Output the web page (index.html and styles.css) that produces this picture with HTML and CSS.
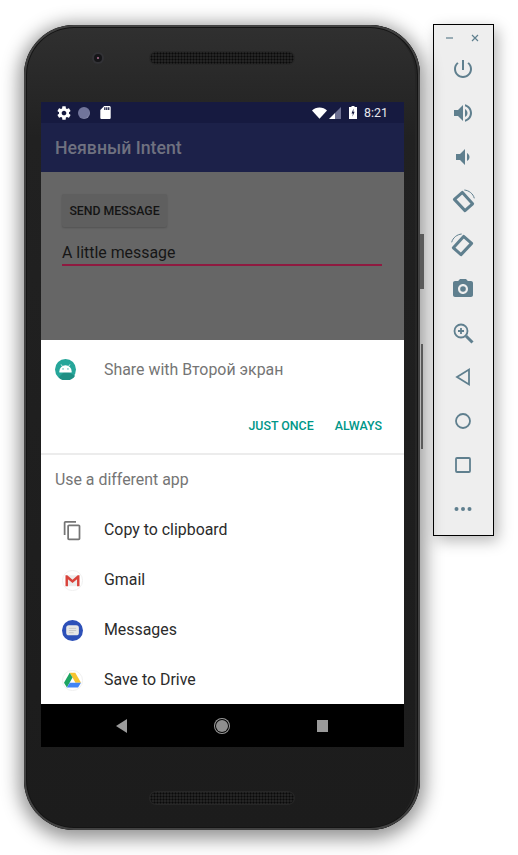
FILE: index.html
```html
<!DOCTYPE html>
<html lang="ru">
<head>
    <meta charset="UTF-8">
    <title>Неявный Intent</title>
    <link rel="stylesheet" href="styles.css">
</head>
<body>
    <div class="phone">
        <div class="side-key side-key-top"></div>
        <div class="side-key side-key-bottom"></div>

        <div class="phone-top">
            <div class="lens"></div>
            <div class="speaker"></div>
        </div>

        <div class="screen">
            <div class="status-bar">
                <div class="status-left">
                    <svg class="status-gear" viewBox="0 0 24 24"><path d="M19.43 12.98c.04-.32.07-.64.07-.98s-.03-.66-.07-.98l2.11-1.65c.19-.15.24-.42.12-.64l-2-3.46c-.12-.22-.39-.3-.61-.22l-2.49 1c-.52-.4-1.08-.73-1.69-.98l-.38-2.65C14.46 2.18 14.25 2 14 2h-4c-.25 0-.46.18-.49.42l-.38 2.65c-.61.25-1.17.59-1.69.98l-2.49-1c-.23-.09-.49 0-.61.22l-2 3.46c-.13.22-.07.49.12.64l2.11 1.65c-.04.32-.07.65-.07.98s.03.66.07.98l-2.11 1.65c-.19.15-.24.42-.12.64l2 3.46c.12.22.39.3.61.22l2.49-1c.52.4 1.08.73 1.69.98l.38 2.65c.03.24.24.42.49.42h4c.25 0 .46-.18.49-.42l.38-2.65c.61-.25 1.17-.59 1.69-.98l2.49 1c.23.09.49 0 .61-.22l2-3.46c.12-.22.07-.49-.12-.64l-2.11-1.65zM12 15.5c-1.93 0-3.5-1.57-3.5-3.5s1.57-3.5 3.5-3.5 3.5 1.57 3.5 3.5-1.57 3.5-3.5 3.5z"/></svg>
                    <div class="status-dot"></div>
                    <svg class="status-sd" viewBox="4 2 16 20"><path d="M18 2h-8L4.02 8 4 20c0 1.1.9 2 2 2h12c1.1 0 2-.9 2-2V4c0-1.1-.9-2-2-2zm-6 6h-2V4h2v4zm3 0h-2V4h2v4zm3 0h-2V4h2v4z"/></svg>
                </div>
                <div class="status-right">
                    <svg class="status-wifi" viewBox="0 0 16 12"><path d="M0 3.200C2 1.200 5 0 8 0s6 1.200 8 3.200L8 12z"/></svg>
                    <svg class="status-signal" viewBox="0 0 12 12"><path class="signal-off" d="M12 0v12H6V6z"/><path d="M6 6v6H0z"/></svg>
                    <svg class="status-battery" viewBox="0 0 8 13"><path d="M2.500 0h3v1H8v12H0V1h2.500z"/><path class="bolt" d="M4.600 2.500L2.500 7.400h1.400l-.5 3.400 2.200-5H4.300z"/></svg>
                    <span class="status-time">8:21</span>
                </div>
            </div>

            <div class="app-bar">Неявный Intent</div>

            <div class="app-content">
                <div class="send-button">SEND MESSAGE</div>
                <div class="message-input">A little message</div>
            </div>

            <div class="sheet">
                <div class="sheet-head">
                    <svg class="app-icon" viewBox="0 0 24 24">
                        <circle cx="12" cy="12" r="12" fill="#26a69a"/>
                        <path d="M12 13l11 6a12 12 0 0 1-19 2z" fill="#1f8f84"/>
                        <path d="M5 14a7 7 0 0 1 14 0v1.500H5z" fill="#fff"/>
                        <path d="M8.500 8.500L7 6.200M15.500 8.500l1.500-2.300" stroke="#fff" stroke-width=".9"/>
                        <circle cx="9.200" cy="11.300" r=".8" fill="#26a69a"/>
                        <circle cx="14.800" cy="11.300" r=".8" fill="#26a69a"/>
                    </svg>
                    <span class="sheet-title">Share with Второй экран</span>
                </div>
                <div class="sheet-actions">
                    <span>JUST ONCE</span>
                    <span>ALWAYS</span>
                </div>
                <div class="sheet-label">Use a different app</div>

                <div class="share-row">
                    <svg class="copy-icon" viewBox="0 0 24 24"><path d="M16 1H4c-1.100 0-2 .9-2 2v14h2V3h12V1zm3 4H8c-1.100 0-2 .9-2 2v14c0 1.100.9 2 2 2h11c1.100 0 2-.9 2-2V7c0-1.100-.9-2-2-2zm0 16H8V7h11v14z"/></svg>
                    <span>Copy to clipboard</span>
                </div>
                <div class="share-row">
                    <svg class="app-icon" viewBox="0 0 24 24">
                        <circle cx="12" cy="12" r="11.500" fill="#fff" stroke="#eee"/>
                        <path d="M4.500 6h15v12.500h-15z" fill="#ececec"/>
                        <path d="M4 18.500V6h2l6 5 6-5h2v12.500h-2.800v-8L12 14.800 6.800 10.500v8z" fill="#d9433b"/>
                    </svg>
                    <span>Gmail</span>
                </div>
                <div class="share-row">
                    <svg class="app-icon" viewBox="0 0 24 24">
                        <circle cx="12" cy="12" r="12" fill="#2d50b8"/>
                        <rect x="4.800" y="6" width="14.500" height="11.500" rx="3" fill="#e6e6e6"/>
                        <path d="M7.800 9.500h8.400M7.800 12h8.400M7.800 14.500h5.500" stroke="#c4c4c4"/>
                    </svg>
                    <span>Messages</span>
                </div>
                <div class="share-row">
                    <svg class="app-icon" viewBox="0 0 24 24">
                        <circle cx="12" cy="12" r="11.500" fill="#fff" stroke="#eee"/>
                        <path d="M8.800 3h6.400l6.500 11.500h-6.300z" fill="#f7c32e"/>
                        <path d="M8.800 3l3.200 5.500-6.400 11.500-3.300-5.500z" fill="#1da462"/>
                        <path d="M8.800 14.500h12.900L18.400 20H5.600z" fill="#4285f4"/>
                    </svg>
                    <span>Save to Drive</span>
                </div>
            </div>

            <div class="nav-bar">
                <svg class="nav-back" viewBox="0 0 11 14"><path d="M11 0v14L0 7z"/></svg>
                <div class="nav-home"></div>
                <div class="nav-recent"></div>
            </div>
        </div>

        <div class="phone-bottom">
            <div class="speaker"></div>
        </div>
    </div>

    <div class="tool-panel">
        <div class="tool-window">
            <svg viewBox="0 0 10 10"><path d="M1 5h7"/></svg>
            <svg viewBox="0 0 10 10"><path d="M2 2l6 6M8 2L2 8"/></svg>
        </div>
        <div class="tool-icon">
            <svg viewBox="0 0 24 24"><path d="M13 3h-2v10h2V3zm4.830 2.170l-1.420 1.420C17.990 7.860 19 9.810 19 12c0 3.870-3.130 7-7 7s-7-3.130-7-7c0-2.190 1.010-4.140 2.580-5.420L6.170 5.170C4.230 6.820 3 9.260 3 12c0 4.970 4.030 9 9 9s9-4.030 9-9c0-2.740-1.230-5.180-3.170-6.830z"/></svg>
        </div>
        <div class="tool-icon">
            <svg viewBox="0 0 24 24"><path d="M3 9v6h4l5 5V4L7 9H3zm13.500 3c0-1.770-1.020-3.290-2.500-4.030v8.050c1.480-.73 2.500-2.250 2.500-4.020zM14 3.230v2.060c2.890.86 5 3.540 5 6.710s-2.110 5.850-5 6.710v2.060c4.010-.91 7-4.490 7-8.770s-2.990-7.860-7-8.770z"/></svg>
        </div>
        <div class="tool-icon">
            <svg viewBox="0 0 24 24"><path d="M18.500 12c0-1.770-1.020-3.290-2.500-4.030v8.050c1.480-.73 2.500-2.250 2.500-4.020zM5 9v6h4l5 5V4L9 9H5z"/></svg>
        </div>
        <div class="tool-icon">
            <svg viewBox="0 0 24 24"><path class="line" d="M11.400 3.400L3.400 10.400 14 21.600l7.600-6.800z"/><path class="arc" d="M13.300 1c4.600.4 8.900 3.700 10 8.300"/></svg>
        </div>
        <div class="tool-icon">
            <svg viewBox="0 0 24 24"><path class="line" d="M12.600 3.400l8 7L10 21.600l-7.600-6.800z"/><path class="arc" d="M10.700 1C6.100 1.400 1.800 4.700.7 9.300"/></svg>
        </div>
        <div class="tool-icon">
            <svg viewBox="0 0 24 24"><path d="M9 2L7.170 4H4c-1.100 0-2 .9-2 2v12c0 1.100.9 2 2 2h16c1.100 0 2-.9 2-2V6c0-1.100-.9-2-2-2h-3.170L15 2H9zm3 15c-2.760 0-5-2.240-5-5s2.240-5 5-5 5 2.240 5 5-2.240 5-5 5z"/><circle cx="12" cy="12" r="2.800"/></svg>
        </div>
        <div class="tool-icon">
            <svg viewBox="0 0 24 24"><circle class="thin" cx="10" cy="10" r="6.500"/><path class="thin" d="M10 7v6M7 10h6"/><path class="line" d="M15 15l6.500 6.500"/></svg>
        </div>
        <div class="tool-icon">
            <svg viewBox="0 0 24 24"><path class="thin" d="M18 4.500v15L6 12z"/></svg>
        </div>
        <div class="tool-icon">
            <svg viewBox="0 0 24 24"><circle class="thin" cx="12" cy="12" r="7"/></svg>
        </div>
        <div class="tool-icon">
            <svg viewBox="0 0 24 24"><rect class="thin" x="5" y="5" width="14" height="14" rx="1"/></svg>
        </div>
        <div class="tool-icon">
            <svg viewBox="0 0 24 24"><circle cx="5.500" cy="12" r="2"/><circle cx="12" cy="12" r="2"/><circle cx="18.500" cy="12" r="2"/></svg>
        </div>
    </div>
</body>
</html>
```

FILE: styles.css
```css
html, body {
    margin: 0;
    padding: 0;
}

body {
    width: 518px;
    height: 855px;
    overflow: hidden;
    background: #fff;
    font-family: Roboto, "Noto Sans", sans-serif;
    display: flex;
    align-items: flex-start;
}

/* phone */

.phone {
    position: relative;
    box-sizing: border-box;
    width: 396px;
    height: 805px;
    margin: 25px 0 0 24px;
    padding: 0 16px 0 17px;
    border-radius: 50px;
    background: linear-gradient(#303030, #212121 14%, #1c1c1c);
    box-shadow: inset 0 0 0 2px #424242, inset 0 0 0 3px #141414, inset -5px 0 0 #252525, 0 4px 18px 5px rgba(0, 0, 0, 0.42);
}

.side-key {
    position: absolute;
    background: #5a5a5a;
}

.side-key-top {
    top: 209px;
    right: -4px;
    width: 4px;
    height: 55px;
}

.side-key-bottom {
    top: 319px;
    right: -3px;
    width: 2px;
    height: 105px;
}

.phone-top {
    position: relative;
    height: 77px;
    display: flex;
    justify-content: center;
    padding: 27px 1px 0 0;
    box-sizing: border-box;
}

.phone-bottom {
    display: flex;
    justify-content: center;
    padding: 45px 1px 0 0;
}

.speaker {
    width: 144px;
    height: 12px;
    border-radius: 6px;
    box-shadow: 0 0 0 1px #272727;
    background: radial-gradient(circle, #0a0a0a 0.8px, #242424 1.2px) 0 0 / 3px 3px;
}

.lens {
    position: absolute;
    left: 53px;
    top: 29px;
    width: 8px;
    height: 8px;
    border-radius: 50%;
    background: radial-gradient(circle, #8a5a74 0.8px, #151518 1.6px);
    box-shadow: 0 0 0 2px #323236;
}

.screen {
    width: 363px;
    height: 645px;
    display: flex;
    flex-direction: column;
    overflow: hidden;
}

/* status bar */

.status-bar {
    height: 21px;
    flex: none;
    background: #161a40;
    display: flex;
    justify-content: space-between;
    align-items: center;
    padding: 0 16px;
    box-sizing: border-box;
}

.status-left,
.status-right {
    display: flex;
    align-items: center;
}

.status-bar svg {
    fill: #fff;
    display: block;
}

.status-gear {
    width: 16px;
    height: 16px;
    margin-left: -1px;
}

.status-dot {
    width: 12px;
    height: 12px;
    margin-left: 6px;
    border-radius: 50%;
    background: radial-gradient(circle at 40% 40%, #71759b 60%, #b4b6c8);
}

.status-sd {
    width: 11px;
    height: 13px;
    margin-left: 10px;
}

.status-wifi {
    width: 15px;
    height: 12px;
}

.status-signal {
    width: 12px;
    height: 12px;
    margin-left: 2px;
}

.status-bar .signal-off {
    fill: #6c6f91;
}

.status-battery {
    width: 8px;
    height: 13px;
    margin-left: 8px;
}

.status-bar .bolt {
    fill: #161a40;
}

.status-time {
    margin-left: 7px;
    font-size: 12.400px;
    color: #e6e7ec;
}

/* app behind the sheet */

.app-bar {
    height: 49px;
    flex: none;
    background: #1c2149;
    color: #6f7180;
    font-size: 17.700px;
    font-weight: 500;
    line-height: 51px;
    padding-left: 14px;
}

.app-content {
    height: 168px;
    flex: none;
    box-sizing: border-box;
    background: #666;
    padding: 22px 22px 0 21px;
}

.send-button {
    width: 105px;
    height: 33px;
    background: #5f5f5f;
    border-radius: 2px;
    box-shadow: 0 1px 2px rgba(0, 0, 0, 0.2);
    color: #141414;
    font-size: 12.300px;
    line-height: 34px;
    text-align: center;
    font-weight: 500;
}

.message-input {
    margin-top: 14px;
    height: 23px;
    border-bottom: 2px solid #8f1a40;
    color: #161616;
    font-size: 15.900px;
    line-height: 23px;
}

/* share sheet */

.sheet {
    height: 364px;
    flex: none;
    background: #fff;
    overflow: hidden;
    font-size: 15.900px;
    color: #2b2b2b;
}

.sheet-head {
    height: 58px;
    display: flex;
    align-items: center;
    padding-left: 14px;
}

.sheet-title {
    margin-left: 28px;
    color: #757575;
}

.app-icon {
    width: 21px;
    height: 21px;
    flex: none;
}

.sheet-actions {
    height: 57px;
    box-sizing: border-box;
    display: flex;
    justify-content: flex-end;
    align-items: center;
    gap: 21px;
    padding-right: 22px;
    border-bottom: 2px solid #ececec;
    color: #009688;
    font-size: 12.400px;
    font-weight: 500;
}

.sheet-label {
    height: 50px;
    line-height: 50px;
    padding-left: 14px;
    color: #757575;
}

.share-row {
    height: 50px;
    display: flex;
    align-items: center;
    padding-left: 21px;
}

.share-row span {
    margin: 0 0 2px 21px;
}

.copy-icon {
    width: 21px;
    height: 21px;
    flex: none;
    fill: #757575;
}

/* nav bar */

.nav-bar {
    height: 43px;
    flex: none;
    background: #000;
    display: flex;
    align-items: center;
    padding-left: 75px;
}

.nav-back {
    width: 11px;
    height: 14px;
    fill: #9a9a9a;
}

.nav-home {
    width: 12px;
    height: 12px;
    margin-left: 89px;
    border-radius: 50%;
    background: #8f8f8f;
    box-shadow: 0 0 0 1px #000, 0 0 0 2px #9a9a9a;
}

.nav-recent {
    width: 11px;
    height: 12px;
    margin-left: 89px;
    background: #9a9a9a;
}

/* emulator tool panel */

.tool-panel {
    box-sizing: border-box;
    width: 61px;
    height: 512px;
    margin: 24px 0 0 13px;
    padding: 6px 2px 0 0;
    background: #eee;
    border: 1px solid #000;
    box-shadow: 4px 5px 14px rgba(0, 0, 0, 0.28);
    display: flex;
    flex-direction: column;
    align-items: center;
}

.tool-window {
    height: 15px;
    margin-bottom: 1px;
    display: flex;
    gap: 15px;
}

.tool-window svg {
    width: 10px;
    height: 10px;
    margin-top: 2px;
    fill: none;
    stroke: #5f7f8e;
    stroke-width: 1.200px;
}

.tool-icon {
    height: 44px;
    width: 100%;
    flex: none;
    display: flex;
    justify-content: center;
    align-items: center;
}

.tool-icon svg {
    width: 24px;
    height: 24px;
    fill: #5f7f8e;
}

.tool-icon .line {
    fill: none;
    stroke: #5f7f8e;
    stroke-width: 3px;
    stroke-linejoin: round;
}

.tool-icon .thin {
    fill: none;
    stroke: #5f7f8e;
    stroke-width: 1.800px;
}

.tool-icon .arc {
    fill: none;
    stroke: #5f7f8e;
    stroke-width: 1px;
}
```
